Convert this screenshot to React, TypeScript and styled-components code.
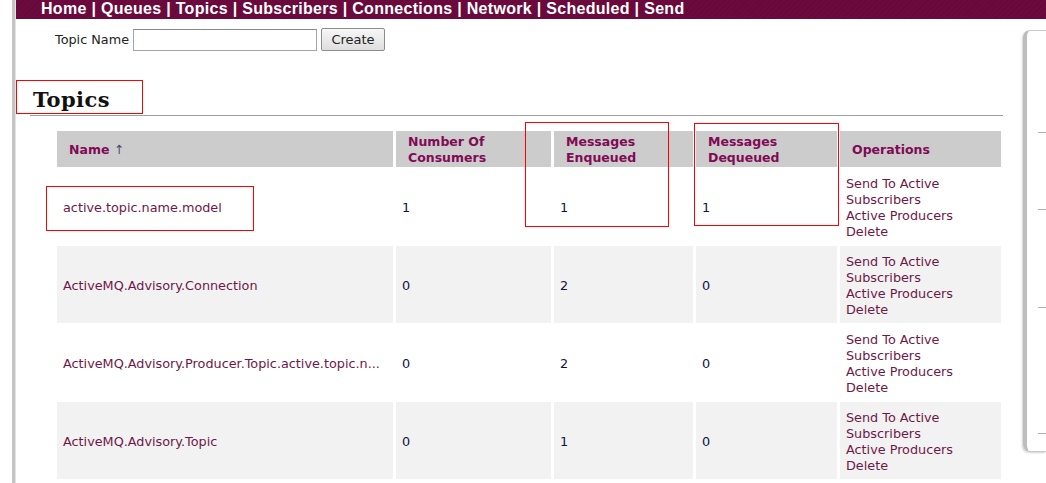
import styled, { createGlobalStyle } from "styled-components";

const GlobalStyle = createGlobalStyle`
    html, body {
        margin: 0;
        padding: 0;
        background: #fff;
    }
    body {
        font-family: "DejaVu Sans", Verdana, sans-serif;
        font-size: 12.8px;
    }
`;

const Page = styled.div`
    position: relative;
    width: 1046px;
    height: 483px;
    overflow: hidden;
    background: #fff;
`;

const Frame = styled.div`
    margin-left: 12px;
    height: 100%;
    border-left: 3px solid #c4c4c4;
    box-shadow: inset 1px 0 0 #e2e2e2;
`;

const NavBar = styled.div`
    height: 19px;
    line-height: 18px;
    padding-left: 25px;
    margin-left: 1px;
    background-color: #6c0a3d;
    background-image: repeating-linear-gradient(
        -45deg,
        rgba(0, 0, 0, 0.08) 0,
        rgba(0, 0, 0, 0.08) 1px,
        transparent 1px,
        transparent 4px
    );
    color: #fff;
    font-family: "Liberation Sans", Arial, sans-serif;
    font-weight: bold;
    font-size: 16px;
    letter-spacing: 0.3px;
    white-space: nowrap;
`;

const NavLink = styled.a`
    color: #fff;
    text-decoration: none;
`;

const MainRow = styled.div`
    display: flex;
`;

const Content = styled.div`
    width: 1008px;
    flex-shrink: 0;
`;

const CreateForm = styled.form`
    display: flex;
    align-items: center;
    gap: 4px;
    margin-top: 9px;
    padding-left: 40px;
    height: 23px;
    color: #222;
`;

const Label = styled.label`
    font-size: 12.8px;
`;

const TextInput = styled.input`
    box-sizing: border-box;
    width: 184px;
    height: 22px;
    border: 1px solid #a5a5a5;
    border-top-color: #8a8a8a;
    padding: 0 3px;
`;

const CreateButton = styled.button`
    box-sizing: border-box;
    width: 64px;
    height: 23px;
    border: 1px solid #8c8c8c;
    border-radius: 2px;
    background: linear-gradient(#f7f7f7, #dedede);
    font-family: "DejaVu Sans", Verdana, sans-serif;
    font-size: 13px;
    color: #222;
    padding: 0;
`;

const Heading = styled.h2`
    margin: 36px 0 0 0;
    padding-left: 18px;
    font-family: "DejaVu Serif", Georgia, serif;
    font-weight: bold;
    font-size: 21px;
    line-height: 26px;
    letter-spacing: 0.4px;
    color: #111;
`;

const Rule = styled.div`
    margin: 2px 0 0 15px;
    width: 973px;
    height: 1px;
    background: #a0a0a0;
`;

const Table = styled.table`
    margin: 14px 0 0 39px;
    width: 950px;
    table-layout: fixed;
    border-collapse: separate;
    border-spacing: 3px 1px;
`;

const HeadCell = styled.th`
    background: #cccccc;
    height: 36px;
    box-sizing: border-box;
    padding: 1px 6px 0 12px;
    text-align: left;
    vertical-align: middle;
    font-weight: bold;
    font-size: 12.5px;
    line-height: 16px;
    color: #800a55;
`;

const SortArrow = styled.span`
    font-weight: normal;
    color: #4a4a6a;
`;

const Row = styled.tr<{ $shade: boolean }>`
    background: ${(p) => (p.$shade ? "#f2f2f2" : "#ffffff")};
`;

const Cell = styled.td`
    height: 77px;
    box-sizing: border-box;
    padding: 7px 6px 5px 6px;
    vertical-align: middle;
    font-size: 12.8px;
    line-height: 16px;
    color: #101040;
    white-space: nowrap;
    overflow: hidden;
`;

const NameLink = styled.a`
    color: #6e1848;
    text-decoration: none;
`;

const OpLink = styled.a`
    display: block;
    color: #6e1848;
    text-decoration: none;
`;

const Sidebar = styled.div`
    flex: 1;
    margin: 11px 0 0 0;
    height: 422px;
    box-sizing: border-box;
    border: 1px solid #c9c9c9;
    border-left: 4px solid #bdbdbd;
    border-right: none;
    border-radius: 7px 0 0 7px;
    box-shadow: -1px 1px 2px rgba(0, 0, 0, 0.18);
    display: flex;
    flex-direction: column;
    padding-left: 11px;
`;

const SideSection = styled.div<{ $h: number }>`
    height: ${(p) => p.$h}px;
    flex-shrink: 0;
    border-bottom: 1px solid #b0b0b0;
    &:last-child {
        border-bottom: none;
    }
`;

const Mark = styled.div<{ $x: number; $y: number; $w: number; $h: number }>`
    position: absolute;
    left: ${(p) => p.$x}px;
    top: ${(p) => p.$y}px;
    width: ${(p) => p.$w}px;
    height: ${(p) => p.$h}px;
    box-sizing: border-box;
    border: 1px solid #ff0000;
    pointer-events: none;
`;

const navItems = ["Home", "Queues", "Topics", "Subscribers", "Connections", "Network", "Scheduled", "Send"];

const topics = [
    { name: "active.topic.name.model", consumers: 1, enqueued: 1, dequeued: 1 },
    { name: "ActiveMQ.Advisory.Connection", consumers: 0, enqueued: 2, dequeued: 0 },
    { name: "ActiveMQ.Advisory.Producer.Topic.active.topic.n...", consumers: 0, enqueued: 2, dequeued: 0 },
    { name: "ActiveMQ.Advisory.Topic", consumers: 0, enqueued: 1, dequeued: 0 },
];

const App = () => {
    return (
        <Page>
            <GlobalStyle />
            <Frame>
                <NavBar>
                    {navItems.map((item, i) => (
                        <span key={item}>
                            {i > 0 && " | "}
                            <NavLink href="#">{item}</NavLink>
                        </span>
                    ))}
                </NavBar>
                <MainRow>
                    <Content>
                        <CreateForm onSubmit={(e) => e.preventDefault()}>
                            <Label>Topic Name</Label>
                            <TextInput type="text" />
                            <CreateButton type="submit">Create</CreateButton>
                        </CreateForm>
                        <Heading>Topics</Heading>
                        <Rule />
                        <Table>
                            <colgroup>
                                <col style={{ width: 336 }} />
                                <col style={{ width: 155 }} />
                                <col style={{ width: 139 }} />
                                <col style={{ width: 141 }} />
                                <col style={{ width: 161 }} />
                            </colgroup>
                            <thead>
                                <tr>
                                    <HeadCell>
                                        Name <SortArrow>↑</SortArrow>
                                    </HeadCell>
                                    <HeadCell>
                                        Number Of
                                        <br />
                                        Consumers
                                    </HeadCell>
                                    <HeadCell>
                                        Messages
                                        <br />
                                        Enqueued
                                    </HeadCell>
                                    <HeadCell>
                                        Messages
                                        <br />
                                        Dequeued
                                    </HeadCell>
                                    <HeadCell>Operations</HeadCell>
                                </tr>
                            </thead>
                            <tbody>
                                {topics.map((t, i) => (
                                    <Row key={t.name} $shade={i % 2 === 1}>
                                        <Cell>
                                            <NameLink href="#">{t.name}</NameLink>
                                        </Cell>
                                        <Cell>{t.consumers}</Cell>
                                        <Cell>{t.enqueued}</Cell>
                                        <Cell>{t.dequeued}</Cell>
                                        <Cell>
                                            <OpLink href="#">Send To Active</OpLink>
                                            <OpLink href="#">Subscribers</OpLink>
                                            <OpLink href="#">Active Producers</OpLink>
                                            <OpLink href="#">Delete</OpLink>
                                        </Cell>
                                    </Row>
                                ))}
                            </tbody>
                        </Table>
                    </Content>
                    <Sidebar>
                        <SideSection $h={101} />
                        <SideSection $h={76} />
                        <SideSection $h={97} />
                        <SideSection $h={125} />
                        <SideSection $h={20} />
                    </Sidebar>
                </MainRow>
            </Frame>
            <Mark $x={16} $y={80} $w={127} $h={34} />
            <Mark $x={46} $y={186} $w={208} $h={45} />
            <Mark $x={525} $y={122} $w={144} $h={105} />
            <Mark $x={694} $y={123} $w={145} $h={103} />
        </Page>
    );
};

export default App;
